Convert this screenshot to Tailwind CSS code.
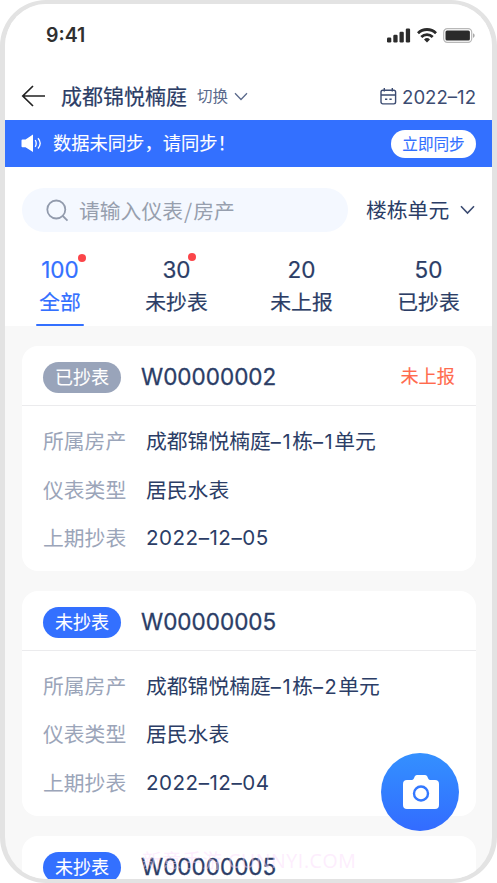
<!DOCTYPE html>
<html lang="zh-CN">
<head>
<meta charset="utf-8">
<title>抄表</title>
<script src="https://cdn.jsdelivr.net/npm/@tailwindcss/browser@4"></script>
</head>
<body class="bg-white font-['Liberation_Sans','Noto_Sans_CJK_SC',sans-serif] text-[#2b3d66]">
<div class="relative w-[497px] h-[883px] overflow-hidden rounded-[46px] border-[5px] border-t-4 border-b-4 border-[#e3e3e3] bg-[#f8f8f8] flex flex-col">
  <header class="bg-white h-[116px] shrink-0 flex flex-col">
    <div class="h-[62px] flex items-center justify-between pl-[41px] pr-[17px]">
      <span class="pt-[2px] font-['Inter',sans-serif] font-semibold text-[19.5px] leading-none text-[#303030]">9:41</span>
      <div class="flex items-center gap-[6px] text-[#2b2b2b]">
        <svg class="w-[24px] h-[15px]" viewBox="0 0 24 15" fill="currentColor"><rect x="0" y="9.5" width="4.3" height="5" rx="1.2"/><rect x="6.3" y="6.8" width="4.3" height="7.7" rx="1.2"/><rect x="12.5" y="3.7" width="4.3" height="10.8" rx="1.2"/><rect x="18.8" y="0.5" width="4.3" height="14" rx="1.2"/></svg>
        <svg class="w-[20px] h-[15px]" viewBox="0 0 20 15" fill="none" stroke="currentColor" stroke-width="2.8"><path d="M1 5.2a12.8 12.8 0 0 1 18 0"/><path d="M4.3 9a8.2 8.2 0 0 1 11.4 0"/><path d="M10 14.5l-3-3a4.4 4.4 0 0 1 6 0z" fill="currentColor" stroke="none"/></svg>
        <svg class="w-[32px] h-[15px]" viewBox="0 0 32 15"><rect x=".7" y=".7" width="28" height="13.6" rx="3.6" fill="none" stroke="#b8b8b8" stroke-width="1.2"/><rect x="2.5" y="2.5" width="24.4" height="10" rx="1.5" fill="#2b2b2b"/><path d="M30 5.2c2.2.8 2.2 3.8 0 4.6z" fill="#a8a8a8"/></svg>
      </div>
    </div>
    <div class="h-[54px] flex items-center pl-[16px] pr-[16px] pt-[7px]">
      <svg class="w-[25px] h-[22px] shrink-0 mb-[2px]" viewBox="0 0 25 22" fill="none" stroke="#222" stroke-width="1.7"><path d="M24 11H1.5M12 1L1.8 11L12 21"/></svg>
      <h1 class="ml-[15px] text-[21px] leading-none [-webkit-text-stroke:0.2px]">成都锦悦楠庭</h1>
      <span class="ml-[10px] text-[15.5px] leading-none text-[#5b6a8c]">切换</span>
      <svg class="ml-[6px] w-[14px] h-[9px]" viewBox="0 0 14 9" fill="none" stroke="#5b6a8c" stroke-width="1.3"><path d="M1 1.2L7 7.5L13 1.2"/></svg>
      <svg class="ml-auto w-[17px] h-[17px]" viewBox="0 0 17 17" fill="none" stroke="#3c4c72" stroke-width="1.4"><rect x="1" y="2.3" width="14.6" height="13.6" rx="1.8"/><path d="M1 7h14.6M4.3 0v3.5M12.3 0v3.5M5 11.3h2.3M9.4 11.3h2.3"/></svg>
      <span class="ml-[5px] pt-[2px] font-['Inter',sans-serif] text-[18.6px] leading-none text-[#3c4c72]">2022–12</span>
    </div>
  </header>
  <div class="h-[47px] shrink-0 bg-[#3370ff] text-white flex items-center pl-[16px] pr-[16px]">
    <svg class="w-[21px] h-[19px]" viewBox="0 0 21 19" fill="none"><path d="M1.5 5.5H4.5L12 .6V18L4.5 13.3H1.5Q.5 13.3.5 12.3V6.5Q.5 5.5 1.5 5.5Z" fill="#fff"/><path d="M14.2 6q2 3.4 0 6.8M17 4.3q4.4 5 0 10.2" stroke="#fff" stroke-width="1.3"/></svg>
    <p class="ml-[11px] pt-[2px] text-[18.3px] leading-none [-webkit-text-stroke:0.1px]">数据未同步，请同步！</p>
    <button class="ml-auto w-[85px] h-[28px] pt-[2px] rounded-full bg-white text-[#3370ff] text-[15.6px] leading-none [-webkit-text-stroke:0.1px]">立即同步</button>
  </div>
  <section class="h-[159px] shrink-0 bg-white flex flex-col">
    <div class="mt-[21px] ml-[17px] mr-[16px] flex items-center">
      <div class="w-[326px] h-[44px] rounded-full bg-[#f4f8ff] flex items-center pl-[24px] text-[#979fae]">
        <svg class="w-[23px] h-[23px]" viewBox="0 0 23 23" fill="none" stroke="#929bad" stroke-width="1.8"><circle cx="10.3" cy="10.5" r="9"/><path d="M16.8 17L21.5 21.6"/></svg>
        <span class="ml-[10px] pt-[2px] text-[20.8px] leading-none">请输入仪表<span class="font-['Noto_Sans_CJK_SC',sans-serif] mx-[1px]">/</span>房产</span>
      </div>
      <span class="ml-[18px] pt-[2px] text-[20.8px] leading-none">楼栋单元</span>
      <svg class="mr-[1px] ml-auto w-[15px] h-[10px]" viewBox="0 0 15 10" fill="none" stroke="#3c4c72" stroke-width="1.6"><path d="M1 1.2L7.5 8L14 1.2"/></svg>
    </div>
    <nav class="mt-[24px] pl-[31px] flex text-[20.8px] leading-none [-webkit-text-stroke:0.2px]">
      <div class="relative w-[48px] h-[70px] flex flex-col items-center text-[#3370ff]">
        <span class="font-['Inter',sans-serif] text-[22.5px] leading-[28px]">100</span><span class="mt-[9px] whitespace-nowrap">全部</span>
        <i class="absolute left-[42px] -top-[2px] w-[8px] h-[8px] rounded-full bg-[#fb4549]"></i>
        <i class="absolute left-0 bottom-0 w-[48px] h-[2.5px] rounded-full bg-[#3370ff]"></i>
      </div>
      <div class="relative ml-[61px] w-[63px] h-[70px] flex flex-col items-center">
        <span class="font-['Inter',sans-serif] text-[22.5px] leading-[28px]">30</span><span class="mt-[9px]">未抄表</span>
        <i class="absolute left-[43px] -top-[3px] w-[8px] h-[8px] rounded-full bg-[#fb4549]"></i>
      </div>
      <div class="ml-[62px] w-[63px] h-[70px] flex flex-col items-center">
        <span class="font-['Inter',sans-serif] text-[22.5px] leading-[28px]">20</span><span class="mt-[9px]">未上报</span>
      </div>
      <div class="ml-[64px] w-[63px] h-[70px] flex flex-col items-center">
        <span class="font-['Inter',sans-serif] text-[22.5px] leading-[28px]">50</span><span class="mt-[9px]">已抄表</span>
      </div>
    </nav>
  </section>
  <main class="pt-[20px] pl-[17px] pr-[16px] flex flex-col gap-[20px]">
    <article class="h-[225px] shrink-0 rounded-[16px] bg-white">
      <div class="h-[60px] border-b border-[#ebebed] pt-[3px] pl-[21px] pr-[21px] flex items-center">
        <span class="w-[78px] h-[31px] pt-[2px] rounded-full bg-[#99a4ba] text-white text-[18px] leading-none [-webkit-text-stroke:0.1px] flex items-center justify-center">已抄表</span>
        <span class="ml-[20px] font-['Inter',sans-serif] [-webkit-text-stroke:0.3px] text-[22.5px] leading-none">W00000002</span>
        <span class="ml-auto pt-[1px] text-[18.2px] leading-none text-[#ff6b4d] [-webkit-text-stroke:0.1px]">未上报</span>
      </div>
      <dl class="pt-[12px] pl-[21px] grid grid-cols-[103px_1fr] auto-rows-[48.4px] items-center text-[20.8px] leading-none">
        <dt class="pt-[1px] text-[#9ba5b9]">所属房产</dt><dd class="pt-[1px]">成都锦悦楠庭<span class="font-['Inter',sans-serif] text-[20px] tracking-[1.6px]">–1</span>栋<span class="font-['Inter',sans-serif] text-[20px] tracking-[1.6px]">–1</span>单元</dd>
        <dt class="pt-[1px] text-[#9ba5b9]">仪表类型</dt><dd class="pt-[1px]">居民水表</dd>
        <dt class="pt-[1px] text-[#9ba5b9]">上期抄表</dt><dd class="pb-[1px] font-['Inter',sans-serif] text-[20.6px] tracking-[0.5px]">2022–12–05</dd>
      </dl>
    </article>
    <article class="h-[225px] shrink-0 rounded-[16px] bg-white">
      <div class="h-[60px] border-b border-[#ebebed] pt-[3px] pl-[21px] pr-[21px] flex items-center">
        <span class="w-[78px] h-[31px] pt-[2px] rounded-full bg-[#3370ff] text-white text-[18px] leading-none [-webkit-text-stroke:0.1px] flex items-center justify-center">未抄表</span>
        <span class="ml-[20px] font-['Inter',sans-serif] [-webkit-text-stroke:0.3px] text-[22.5px] leading-none">W00000005</span>
      </div>
      <dl class="pt-[12px] pl-[21px] grid grid-cols-[103px_1fr] auto-rows-[48.4px] items-center text-[20.8px] leading-none">
        <dt class="pt-[1px] text-[#9ba5b9]">所属房产</dt><dd class="pt-[1px]">成都锦悦楠庭<span class="font-['Inter',sans-serif] text-[20px] tracking-[1.6px]">–1</span>栋<span class="font-['Inter',sans-serif] text-[20px] tracking-[1.6px]">–2</span>单元</dd>
        <dt class="text-[#9ba5b9]">仪表类型</dt><dd>居民水表</dd>
        <dt class="pt-[1px] text-[#9ba5b9]">上期抄表</dt><dd class="pb-[1px] font-['Inter',sans-serif] text-[20.6px] tracking-[0.5px]">2022–12–04</dd>
      </dl>
    </article>
    <article class="h-[225px] shrink-0 rounded-[16px] bg-white">
      <div class="h-[60px] border-b border-[#ebebed] pt-[3px] pl-[21px] pr-[21px] flex items-center">
        <span class="w-[78px] h-[31px] pt-[2px] rounded-full bg-[#3370ff] text-white text-[18px] leading-none [-webkit-text-stroke:0.1px] flex items-center justify-center">未抄表</span>
        <span class="ml-[20px] font-['Inter',sans-serif] [-webkit-text-stroke:0.3px] text-[22.5px] leading-none">W00000005</span>
      </div>
    </article>
  </main>
  <button class="absolute left-[376px] top-[749px] w-[78px] h-[78px] rounded-full bg-linear-to-b from-[#3490ff] to-[#336bff] flex items-center justify-center">
    <svg class="w-[36px] h-[34px] ml-[1px]" viewBox="0 0 36 34"><path d="M4 5H9Q10.3 5 11 3.3Q12 0 14 0H22Q24 0 25 3.3Q25.7 5 27 5H32Q36 5 36 9V30Q36 34 32 34H4Q0 34 0 30V9Q0 5 4 5Z" fill="#fff"/><circle cx="18" cy="18.5" r="7" fill="none" stroke="#3378ff" stroke-width="2.4"/></svg>
  </button>
  <span class="absolute left-[137px] top-[847px] text-[19.5px] tracking-[0.6px] leading-none whitespace-nowrap text-[#fbdcfb]/50 font-['Open_Sans','Noto_Sans_CJK_SC',sans-serif]">新意手游 CUNNYI.COM</span>
</div>
</body>
</html>
